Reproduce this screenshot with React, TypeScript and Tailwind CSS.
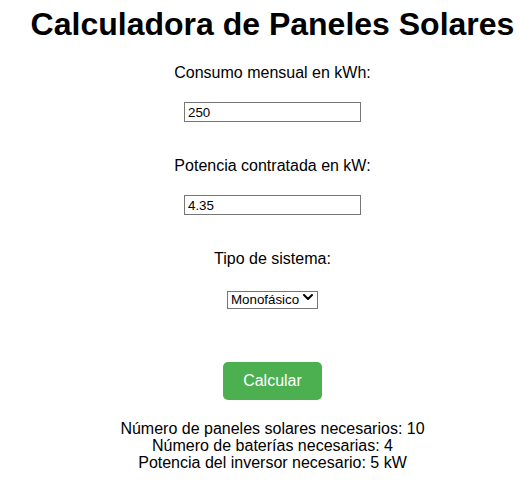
import React, { useState } from 'react';

const App: React.FC = () => {
  const [consumo, setConsumo] = useState('250');
  const [potencia, setPotencia] = useState('4.35');
  const [sistema, setSistema] = useState('monofasico');

  return (
    <div className="min-h-screen bg-white text-black font-['Liberation_Sans',Arial,sans-serif]">
      <div className="w-[545px] flex flex-col items-center pt-[6px]">
        <h1 className="text-[32px] leading-[37px] font-bold">Calculadora de Paneles Solares</h1>

        <label htmlFor="consumo" className="mt-[21px] text-[16px] leading-[18px]">
          Consumo mensual en kWh:
        </label>
        <input
          id="consumo"
          type="text"
          value={consumo}
          onChange={(e) => setConsumo(e.target.value)}
          className="mt-[20px] w-[177px] h-[20px] border border-[#767676] px-[3px] text-[13.33px] leading-[16px] outline-none"
        />

        <label htmlFor="potencia" className="mt-[35px] text-[16px] leading-[18px]">
          Potencia contratada en kW:
        </label>
        <input
          id="potencia"
          type="text"
          value={potencia}
          onChange={(e) => setPotencia(e.target.value)}
          className="mt-[20px] w-[177px] h-[20px] border border-[#767676] px-[3px] text-[13.33px] leading-[16px] outline-none"
        />

        <label htmlFor="sistema" className="mt-[35px] text-[16px] leading-[18px]">
          Tipo de sistema:
        </label>
        {/* native arrow differs per platform, so draw our own */}
        <div className="relative mt-[19px] w-[91px] h-[18px]">
          <select
            id="sistema"
            value={sistema}
            onChange={(e) => setSistema(e.target.value)}
            className="appearance-none w-full h-full border border-[#767676] bg-white pl-[3px] pr-[16px] text-[13.33px] leading-[16px] text-[#000] outline-none"
          >
            <option value="monofasico">Monofásico</option>
            <option value="trifasico">Trifásico</option>
          </select>
          <svg
            className="pointer-events-none absolute right-[5px] top-[7px]"
            width="10"
            height="6"
            viewBox="0 0 10 6"
            fill="none"
          >
            <polyline points="1,1 5,5 9,1" stroke="#000" strokeWidth="2" strokeLinecap="round" strokeLinejoin="round" />
          </svg>
        </div>

        <button className="mt-[57px] px-[20px] py-[10px] bg-[#4CAF50] text-white text-[16px] leading-[18px] rounded-[5px]">
          Calcular
        </button>

        <div className="mt-[20px] text-[16px] leading-[17px] text-center">
          <p>Número de paneles solares necesarios: 10</p>
          <p>Número de baterías necesarias: 4</p>
          <p>Potencia del inversor necesario: 5 kW</p>
        </div>
      </div>
    </div>
  );
};

export default App;
